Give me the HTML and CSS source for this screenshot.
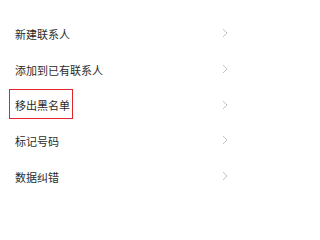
FILE: index.html
```html
<!DOCTYPE html>
<html lang="zh-CN">
<head>
<meta charset="utf-8">
<link rel="stylesheet" href="styles.css">
</head>
<body>
<ul class="menu">
  <li class="row"><span class="label">新建联系人</span><svg class="chev" viewBox="0 0 6 10" width="6" height="10"><polyline points="1,1 5,5 1,9"/></svg></li>
  <li class="row"><span class="label">添加到已有联系人</span><svg class="chev" viewBox="0 0 6 10" width="6" height="10"><polyline points="1,1 5,5 1,9"/></svg></li>
  <li class="row"><span class="label marked">移出黑名单</span><svg class="chev" viewBox="0 0 6 10" width="6" height="10"><polyline points="1,1 5,5 1,9"/></svg></li>
  <li class="row"><span class="label">标记号码</span><svg class="chev" viewBox="0 0 6 10" width="6" height="10"><polyline points="1,1 5,5 1,9"/></svg></li>
  <li class="row"><span class="label">数据纠错</span><svg class="chev" viewBox="0 0 6 10" width="6" height="10"><polyline points="1,1 5,5 1,9"/></svg></li>
</ul>
</body>
</html>
```
FILE: styles.css
```css
html, body {
  margin: 0;
  padding: 0;
  background: #ffffff;
}
body {
  width: 243px;
  height: 207px;
  overflow: hidden;
  font-family: "Noto Sans CJK SC", "Noto Sans", sans-serif;
}
.menu {
  list-style: none;
  margin: 0;
  padding: 16px 0 0 0;
}
.row {
  display: flex;
  align-items: center;
  justify-content: space-between;
  height: 35.75px;
  padding: 0 15px;
}
.label {
  font-size: 11px;
  line-height: 16px;
  color: #2b2b2b;
}
.marked {
  position: relative;
}
.marked::after {
  content: "";
  position: absolute;
  left: -6px;
  right: -3px;
  top: -8px;
  bottom: -6px;
  border: 1.5px solid #e3262e;
}
.chev {
  display: block;
  margin-top: -1.5px;
}
.chev polyline {
  fill: none;
  stroke: #c2c2c2;
  stroke-width: 1;
}
```
